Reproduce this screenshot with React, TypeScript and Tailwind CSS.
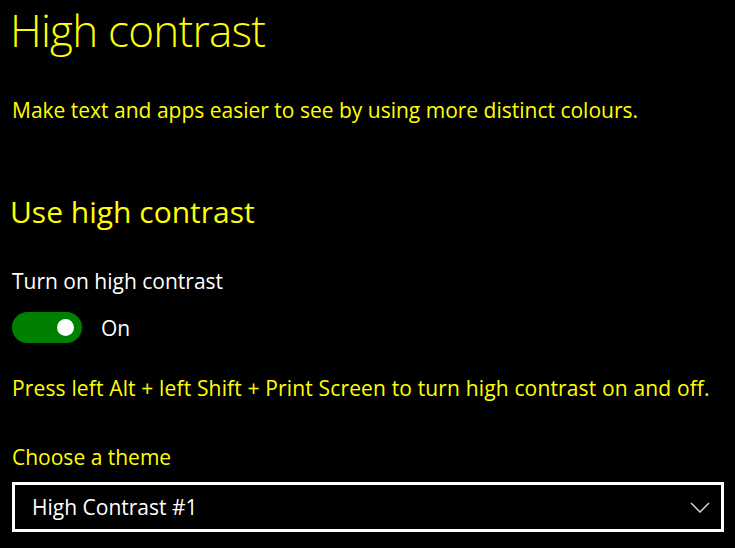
import React from "react";

export default function App() {
  return (
    <div
      className="w-[735px] h-[548px] bg-black overflow-hidden pl-[12px] pt-[0px]"
      style={{ fontFamily: '"Open Sans", "Noto Sans", sans-serif' }}
    >
      <h1 className="text-[#ffff00] text-[44px] font-light leading-[60px] mt-[0px] -ml-[2px] tracking-[-0.75px]">
        High contrast
      </h1>
      <p className="text-[#ffff00] text-[21px] leading-[28px] mt-[36px]">
        Make text and apps easier to see by using more distinct colours.
      </p>
      <h2 className="text-[#ffff00] text-[30px] leading-[36px] mt-[70px] -ml-[2px]">
        Use high contrast
      </h2>
      <p className="text-white text-[21px] leading-[28px] mt-[37px]">Turn on high contrast</p>
      <div className="flex items-center mt-[17px] gap-[19px]">
        <div className="w-[70px] h-[31px] rounded-full bg-[#008000] flex items-center justify-end pr-[8px]">
          <div className="w-[17px] h-[17px] rounded-full bg-white" />
        </div>
        <span className="text-white text-[21px] leading-[28px]">On</span>
      </div>
      <p className="text-[#ffff00] text-[21px] leading-[28px] mt-[31px] tracking-[0.15px]">
        Press left Alt + left Shift + Print Screen to turn high contrast on and off.
      </p>
      <p className="text-[#ffff00] text-[21px] leading-[28px] mt-[41px]">Choose a theme</p>
      <div className="mt-[11px] w-[712px] h-[50px] border-[3px] border-white flex items-center justify-between pl-[17px] pr-[11px]">
        <span className="text-white text-[21px] leading-[28px]">High Contrast #1</span>
        <svg width="20" height="11" viewBox="0 0 20 11" fill="none">
          <path d="M1 1 L10 10 L19 1" stroke="#d0d0d0" strokeWidth="1.5" />
        </svg>
      </div>
    </div>
  );
}
